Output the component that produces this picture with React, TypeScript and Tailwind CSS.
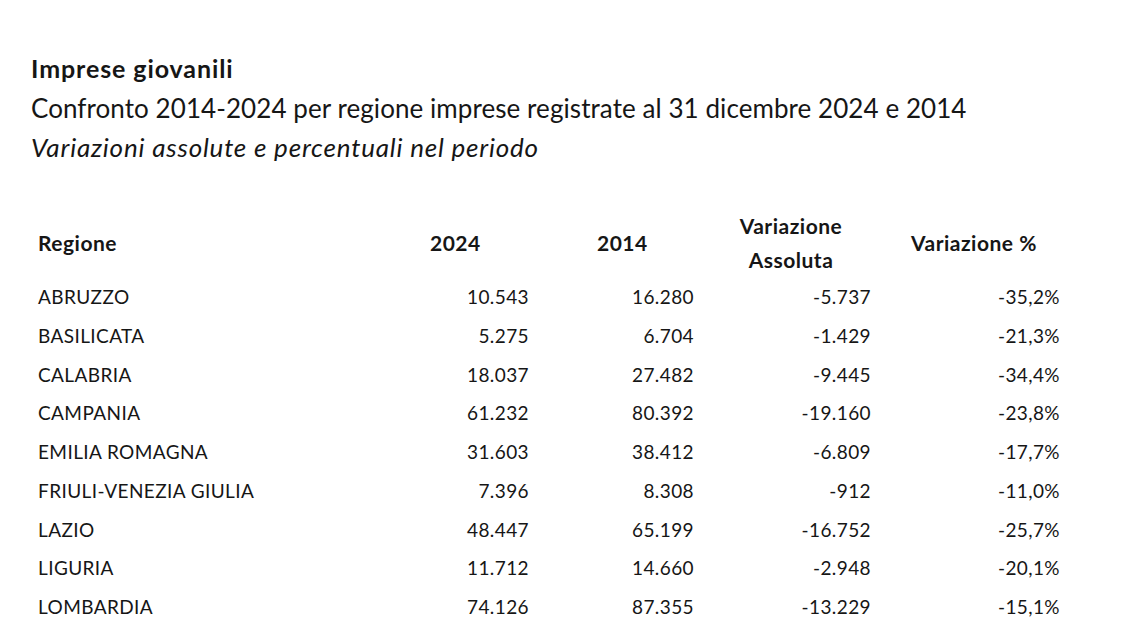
const rows: [string, string, string, string, string][] = [
  ["ABRUZZO", "10.543", "16.280", "-5.737", "-35,2%"],
  ["BASILICATA", "5.275", "6.704", "-1.429", "-21,3%"],
  ["CALABRIA", "18.037", "27.482", "-9.445", "-34,4%"],
  ["CAMPANIA", "61.232", "80.392", "-19.160", "-23,8%"],
  ["EMILIA ROMAGNA", "31.603", "38.412", "-6.809", "-17,7%"],
  ["FRIULI-VENEZIA GIULIA", "7.396", "8.308", "-912", "-11,0%"],
  ["LAZIO", "48.447", "65.199", "-16.752", "-25,7%"],
  ["LIGURIA", "11.712", "14.660", "-2.948", "-20,1%"],
  ["LOMBARDIA", "74.126", "87.355", "-13.229", "-15,1%"],
  ["MARCHE", "12.873", "17.010", "-4.137", "-24,3%"],
];

const cols = "grid grid-cols-[392px_99px_165px_177px_189px]";

export default function App() {
  return (
    <div className="min-h-screen w-full overflow-hidden bg-white text-[#161616] font-['Lato','Open_Sans',sans-serif]">
      <div className="pl-[31px] pt-[49px]">
        <h1 className="text-[25px] font-bold leading-[39px] tracking-[0.9px]">Imprese giovanili</h1>
        <p className="text-[26px] leading-[40px] tracking-[0.07px]">
          Confronto 2014-2024 per regione imprese registrate al 31 dicembre 2024 e 2014
        </p>
        <p className="text-[26px] italic leading-[39px] tracking-[0.8px]">Variazioni assolute e percentuali nel periodo</p>
      </div>

      <div className="mt-[41px] pl-[38px] text-[19px] tracking-[0.4px]">
        <div className={`${cols} h-[70px] items-center text-[21px] font-bold tracking-[0.5px]`}>
          <div>Regione</div>
          <div>2024</div>
          <div className="pl-[68px]">2014</div>
          <div className="pl-[17px] text-center leading-[34px]">
            Variazione
            <br />
            Assoluta
          </div>
          <div className="pl-[40px]">Variazione %</div>
        </div>
        {rows.map((r) => (
          <div key={r[0]} className={`${cols} h-[38.75px] items-center`}>
            <div>{r[0]}</div>
            <div className="text-right">{r[1]}</div>
            <div className="text-right">{r[2]}</div>
            <div className="text-right">{r[3]}</div>
            <div className="text-right">{r[4]}</div>
          </div>
        ))}
      </div>
    </div>
  );
}
